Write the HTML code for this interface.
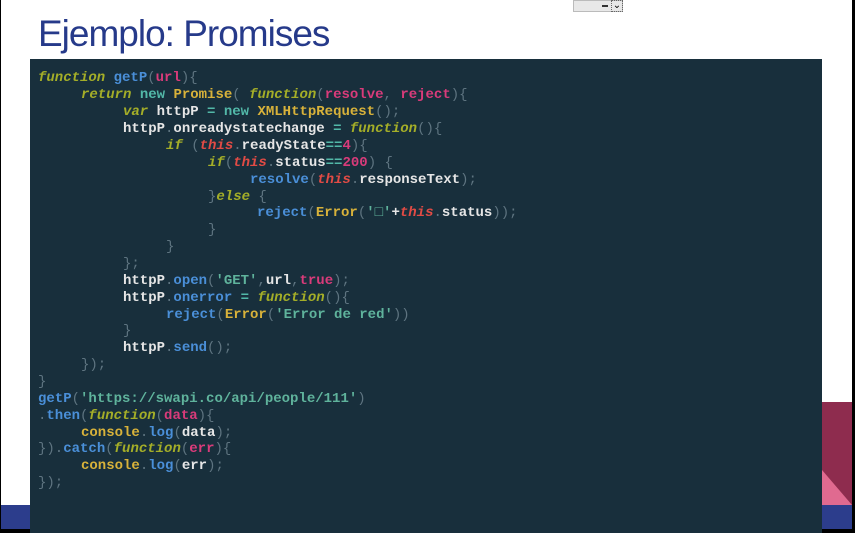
<!DOCTYPE html>
<html><head><meta charset="utf-8"><style>
html,body{margin:0;padding:0;}
body{width:855px;height:533px;position:relative;overflow:hidden;background:#fff;font-family:"Liberation Sans",sans-serif;}
.title{position:absolute;left:38px;top:13px;font-size:37px;color:#263a8a;letter-spacing:-1px;}
.code{position:absolute;left:30px;top:59px;width:792px;height:474px;background:#182f3c;}
.ls{position:absolute;left:0;top:2px;width:855px;height:533px;}
.l{position:absolute;font-family:"Liberation Mono",monospace;font-size:14px;font-weight:bold;color:#e6e6e6;white-space:pre;line-height:17px;}
.k{color:#a4ae28;font-style:italic;}
.f{color:#4a8fd8;}
.p{color:#d93b7a;}
.u{color:#5e7480;font-weight:normal;}
.o{color:#52b8a8;}
.c{color:#d8b23a;}
.t{color:#e14b45;font-style:italic;}
.s{color:#5fb39c;}
.n{color:#d93b7a;}
</style></head><body>
<div class="title">Ejemplo: Promises</div>
<div style="position:absolute;left:573px;top:0;width:50px;height:12px;background:#e8e8e8;border:1px solid #bbb;box-sizing:border-box;"></div>
<div style="position:absolute;left:602px;top:5px;width:6px;height:2px;background:#333;"></div>
<div style="position:absolute;left:611px;top:0;width:12px;height:12px;border:1px dotted #666;box-sizing:border-box;font-size:10px;line-height:10px;text-align:center;">⌄</div>
<div style="position:absolute;left:0;top:505px;width:855px;height:24px;background:#2c3d8c;"></div>
<div style="position:absolute;left:822px;top:402px;width:30px;height:103px;background:#8e2c4e;"></div>
<div style="position:absolute;left:822px;top:470px;width:30px;height:35px;background:#e06a90;clip-path:polygon(0 0,100% 100%,0 100%);"></div>
<div style="position:absolute;left:0;top:529px;width:855px;height:4px;background:#000;"></div>
<div style="position:absolute;left:852px;top:0;width:3px;height:533px;background:#000;"></div>
<div style="position:absolute;left:0;top:0;width:1px;height:533px;background:#000;"></div>
<div class="code"></div>
<div class="ls">
<div class="l" style="left:38px;top:68px"><span class="k">function</span> <span class="f">getP</span><span class="u">(</span><span class="p">url</span><span class="u">){</span></div>
<div class="l" style="left:81px;top:85px"><span class="k">return</span> <span class="o">new</span> <span class="c">Promise</span><span class="u">(</span> <span class="k">function</span><span class="u">(</span><span class="p">resolve</span><span class="u">,</span> <span class="p">reject</span><span class="u">){</span></div>
<div class="l" style="left:123px;top:102px"><span class="k">var</span> httpP <span class="o">=</span> <span class="o">new</span> <span class="c">XMLHttpRequest</span><span class="u">();</span></div>
<div class="l" style="left:123px;top:119px">httpP<span class="u">.</span>onreadystatechange <span class="o">=</span> <span class="k">function</span><span class="u">(){</span></div>
<div class="l" style="left:166px;top:136px"><span class="k">if</span> <span class="u">(</span><span class="t">this</span><span class="u">.</span>readyState<span class="o">==</span><span class="n">4</span><span class="u">){</span></div>
<div class="l" style="left:208px;top:153px"><span class="k">if</span><span class="u">(</span><span class="t">this</span><span class="u">.</span>status<span class="o">==</span><span class="n">200</span><span class="u">)</span> <span class="u">{</span></div>
<div class="l" style="left:250px;top:170px"><span class="f">resolve</span><span class="u">(</span><span class="t">this</span><span class="u">.</span>responseText<span class="u">);</span></div>
<div class="l" style="left:208px;top:187px"><span class="u">}</span><span class="k">else</span> <span class="u">{</span></div>
<div class="l" style="left:257px;top:203px"><span class="f">reject</span><span class="u">(</span><span class="c">Error</span><span class="u">(</span><span class="s">'□'</span>+<span class="t">this</span><span class="u">.</span>status<span class="u">));</span></div>
<div class="l" style="left:208px;top:220px"><span class="u">}</span></div>
<div class="l" style="left:166px;top:237px"><span class="u">}</span></div>
<div class="l" style="left:123px;top:254px"><span class="u">};</span></div>
<div class="l" style="left:123px;top:271px">httpP<span class="u">.</span><span class="f">open</span><span class="u">(</span><span class="s">'GET'</span><span class="u">,</span>url<span class="u">,</span><span class="n">true</span><span class="u">);</span></div>
<div class="l" style="left:123px;top:288px">httpP<span class="u">.</span><span class="f">onerror</span> <span class="o">=</span> <span class="k">function</span><span class="u">(){</span></div>
<div class="l" style="left:166px;top:305px"><span class="f">reject</span><span class="u">(</span><span class="c">Error</span><span class="u">(</span><span class="s">'Error de red'</span><span class="u">))</span></div>
<div class="l" style="left:123px;top:321px"><span class="u">}</span></div>
<div class="l" style="left:123px;top:338px">httpP<span class="u">.</span><span class="f">send</span><span class="u">();</span></div>
<div class="l" style="left:81px;top:355px"><span class="u">});</span></div>
<div class="l" style="left:38px;top:372px"><span class="u">}</span></div>
<div class="l" style="left:38px;top:389px"><span class="f">getP</span><span class="u">(</span><span class="s">'https://swapi.co/api/people/111'</span><span class="u">)</span></div>
<div class="l" style="left:38px;top:406px"><span class="u">.</span><span class="f">then</span><span class="u">(</span><span class="k">function</span><span class="u">(</span><span class="p">data</span><span class="u">){</span></div>
<div class="l" style="left:81px;top:423px"><span class="c">console</span><span class="u">.</span><span class="f">log</span><span class="u">(</span>data<span class="u">);</span></div>
<div class="l" style="left:38px;top:439px"><span class="u">}).</span><span class="f">catch</span><span class="u">(</span><span class="k">function</span><span class="u">(</span><span class="p">err</span><span class="u">){</span></div>
<div class="l" style="left:81px;top:456px"><span class="c">console</span><span class="u">.</span><span class="f">log</span><span class="u">(</span>err<span class="u">);</span></div>
<div class="l" style="left:38px;top:473px"><span class="u">});</span></div>
</div>
</body></html>
